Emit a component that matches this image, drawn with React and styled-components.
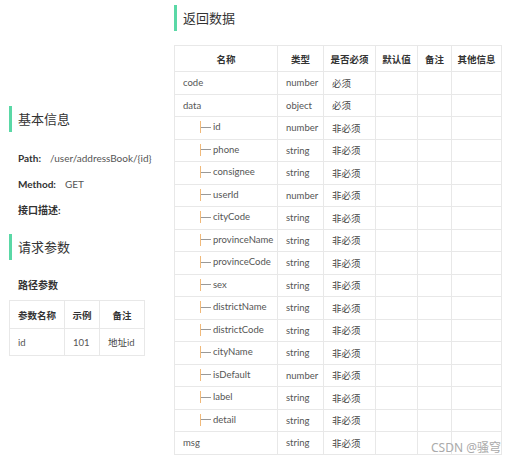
import React from 'react';
import styled, { createGlobalStyle } from 'styled-components';

const GlobalStyle = createGlobalStyle`
  html, body { margin: 0; padding: 0; background: #fff; }
  body {
    font-family: Lato, "Noto Sans CJK SC", sans-serif;
    color: #333;
  }
`;

const fields = [
  { name: 'code', type: 'number', req: '必须' },
  { name: 'data', type: 'object', req: '必须' },
  { name: 'id', type: 'number', req: '非必须', child: true },
  { name: 'phone', type: 'string', req: '非必须', child: true },
  { name: 'consignee', type: 'string', req: '非必须', child: true },
  { name: 'userId', type: 'number', req: '非必须', child: true },
  { name: 'cityCode', type: 'string', req: '非必须', child: true },
  { name: 'provinceName', type: 'string', req: '非必须', child: true },
  { name: 'provinceCode', type: 'string', req: '非必须', child: true },
  { name: 'sex', type: 'string', req: '非必须', child: true },
  { name: 'districtName', type: 'string', req: '非必须', child: true },
  { name: 'districtCode', type: 'string', req: '非必须', child: true },
  { name: 'cityName', type: 'string', req: '非必须', child: true },
  { name: 'isDefault', type: 'number', req: '非必须', child: true },
  { name: 'label', type: 'string', req: '非必须', child: true },
  { name: 'detail', type: 'string', req: '非必须', child: true },
  { name: 'msg', type: 'string', req: '非必须' },
];

const Page = styled.div`
  position: relative;
  display: flex;
  width: 516px;
  height: 464px;
  overflow: hidden;
`;

const LeftCol = styled.div`
  width: 165px;
  padding: 106px 0 0 9px;
`;

const RightCol = styled.div`
  width: 327px;
  padding-top: 5px;
`;

const SectionTitle = styled.h2`
  margin: 0 0 ${p => p.gap || 0}px;
  height: 26px;
  line-height: 26px;
  border-left: 3px solid #5ad8a6;
  padding-left: 6px;
  font-size: 13px;
  font-weight: normal;
  color: #333;
  font-family: "Noto Sans CJK SC", sans-serif;
`;

const InfoLine = styled.div`
  height: 26px;
  line-height: 26px;
  font-size: 10px;
  color: #555;
  padding-left: 9px;
  margin-bottom: ${p => p.gap || 0}px;
  b {
    color: #333;
    font-weight: 700;
    margin-right: 9px;
    font-family: Lato, "Noto Sans CJK SC", sans-serif;
  }
`;

const SubTitle = styled.div`
  font-size: 10px;
  font-weight: 700;
  color: #333;
  padding-left: 9px;
  margin: 17px 0 8px;
  font-family: "Noto Sans CJK SC", sans-serif;
`;

const Table = styled.table`
  border-collapse: collapse;
  table-layout: fixed;
  width: ${p => p.w}px;
  font-size: 9.5px;
  color: #555;
  th, td {
    border: 1px solid #e8e8e8;
    padding: 0 0 0 8px;
    white-space: nowrap;
    overflow: hidden;
    text-align: left;
  }
  th {
    font-weight: 700;
    color: #333;
    text-align: center;
    padding: 0;
    font-family: "Noto Sans CJK SC", sans-serif;
  }
`;

const HeadRow = styled.tr`
  height: ${p => p.h}px;
`;

const BodyRow = styled.tr`
  height: ${p => p.h}px;
`;

const NameCell = styled.td`
  && { padding-left: ${p => (p.child ? 25 : 8)}px; }
`;

const Branch = styled.span`
  display: inline-block;
  vertical-align: middle;
  width: 10px;
  height: 12px;
  margin-right: 2px;
  border-left: 1px solid #f0b97a;
  background: linear-gradient(#999, #999) no-repeat 0 50% / 100% 1px;
  position: relative;
  top: -1px;
`;

const ReqText = styled.span`
  font-family: "Noto Sans CJK SC", sans-serif;
  color: #444;
`;

const Watermark = styled.div`
  position: absolute;
  right: 15px;
  bottom: 8px;
  font-size: 12px;
  color: #aaa;
  font-family: "Noto Sans", "Noto Sans CJK SC", sans-serif;
`;

export default function App() {
  return (
    <>
      <GlobalStyle />
      <Page>
        <LeftCol>
          <SectionTitle gap={13}>基本信息</SectionTitle>
          <InfoLine><b>Path:</b>/user/addressBook/{'{id}'}</InfoLine>
          <InfoLine><b>Method:</b>GET</InfoLine>
          <InfoLine gap={11}><b>接口描述:</b></InfoLine>
          <SectionTitle>请求参数</SectionTitle>
          <SubTitle>路径参数</SubTitle>
          <Table w={135}>
            <colgroup>
              <col style={{ width: 55 }} />
              <col style={{ width: 35 }} />
              <col style={{ width: 45 }} />
            </colgroup>
            <thead>
              <HeadRow h={28}>
                <th>参数名称</th>
                <th>示例</th>
                <th>备注</th>
              </HeadRow>
            </thead>
            <tbody>
              <BodyRow h={27}>
                <td>id</td>
                <td>101</td>
                <td><ReqText>地址</ReqText>id</td>
              </BodyRow>
            </tbody>
          </Table>
        </LeftCol>
        <RightCol>
          <SectionTitle gap={14}>返回数据</SectionTitle>
          <Table w={327}>
            <colgroup>
              <col style={{ width: 103 }} />
              <col style={{ width: 46 }} />
              <col style={{ width: 52 }} />
              <col style={{ width: 42 }} />
              <col style={{ width: 34 }} />
              <col style={{ width: 50 }} />
            </colgroup>
            <thead>
              <HeadRow h={26}>
                <th>名称</th>
                <th>类型</th>
                <th>是否必须</th>
                <th>默认值</th>
                <th>备注</th>
                <th>其他信息</th>
              </HeadRow>
            </thead>
            <tbody>
              {fields.map(f => (
                <BodyRow h={22.5} key={f.name}>
                  <NameCell child={f.child}>
                    {f.child && <Branch />}
                    {f.name}
                  </NameCell>
                  <td>{f.type}</td>
                  <td><ReqText>{f.req}</ReqText></td>
                  <td />
                  <td />
                  <td />
                </BodyRow>
              ))}
            </tbody>
          </Table>
        </RightCol>
        <Watermark>CSDN @骚穹</Watermark>
      </Page>
    </>
  );
}
